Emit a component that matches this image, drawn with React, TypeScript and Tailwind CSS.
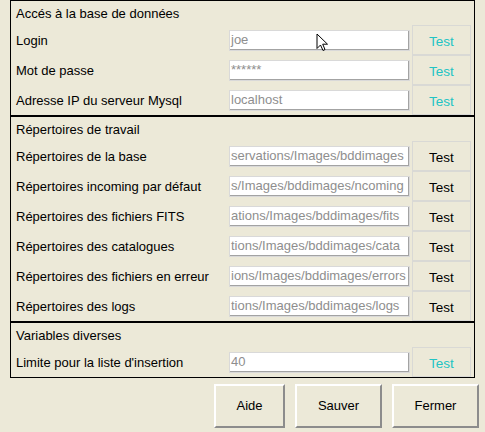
import React from "react";

const FONT = { fontFamily: '"Liberation Sans", Arial, sans-serif' };

type Row = { label: string; value: string; cyan: boolean };

function Field({ label, value, cyan }: Row) {
  return (
    <div className="flex h-[30px] items-center">
      <div className="w-[218px] pl-[5px] pt-[2px] text-[13px] text-black whitespace-nowrap">{label}</div>
      <div className="w-[181px] h-[21px] border border-[#d9d9d9] bg-white">
        <div className="h-full w-full border-r border-b border-[#a3a3a3] overflow-hidden pl-[1px] text-[13px] leading-[18px] text-[#8e8e8e] whitespace-nowrap">
          {value}
        </div>
      </div>
      <div
        className={
          "ml-[2px] w-[59px] h-[30px] pt-[4px] border border-[#d9d9d5] flex items-center justify-center text-[13.5px] " +
          (cyan ? "text-[#22c4c4]" : "text-black")
        }
      >
        Test
      </div>
    </div>
  );
}

function Frame({ title, rows }: { title: string; rows: Row[] }) {
  return (
    <div className="w-[465px] border border-black">
      <div className="h-[24px] flex items-center pl-[5px] pt-[1px] text-[13px] text-black">{title}</div>
      {rows.map((r) => (
        <Field key={r.label} {...r} />
      ))}
    </div>
  );
}

function Btn({ label, w }: { label: string; w: string }) {
  return (
    <div
      className={
        w +
        " h-[44px] border-2 border-t-white border-l-white border-r-[#8c8c8c] border-b-[#8c8c8c] flex items-center justify-center text-[13px] text-black"
      }
    >
      {label}
    </div>
  );
}

export default function App() {
  return (
    <div className="relative w-[485px] h-[432px] bg-[#ece9d8] overflow-hidden" style={FONT}>
      <div className="pl-[10px]">
        <Frame
          title="Accés à la base de données"
          rows={[
            { label: "Login", value: "joe", cyan: true },
            { label: "Mot de passe", value: "******", cyan: true },
            { label: "Adresse IP du serveur Mysql", value: "localhost", cyan: true },
          ]}
        />
        <Frame
          title="Répertoires de travail"
          rows={[
            { label: "Répertoires de la base", value: "servations/Images/bddimages", cyan: false },
            { label: "Répertoires incoming par défaut", value: "s/Images/bddimages/ncoming", cyan: false },
            { label: "Répertoires des fichiers FITS", value: "ations/Images/bddimages/fits", cyan: false },
            { label: "Répertoires des catalogues", value: "tions/Images/bddimages/cata", cyan: false },
            { label: "Répertoires des fichiers en erreur", value: "ions/Images/bddimages/errors", cyan: false },
            { label: "Répertoires des logs", value: "tions/Images/bddimages/logs", cyan: false },
          ]}
        />
        <Frame
          title="Variables diverses"
          rows={[{ label: "Limite pour la liste d'insertion", value: "40", cyan: true }]}
        />
      </div>
      <div className="mt-[6px] flex justify-end gap-[10px] pr-[6px]">
        <Btn label="Aide" w="w-[71px]" />
        <Btn label="Sauver" w="w-[87px]" />
        <Btn label="Fermer" w="w-[87px]" />
      </div>
      <svg
        className="absolute left-[316px] top-[33px]"
        width="13"
        height="19"
        viewBox="0 0 13 19"
      >
        <path
          d="M1 1 L1 15.5 L4.5 12 L7 17.5 L9 16.5 L6.7 11.2 L11.5 11.2 Z"
          fill="white"
          stroke="black"
          strokeWidth="1"
          strokeLinejoin="miter"
        />
      </svg>
    </div>
  );
}
